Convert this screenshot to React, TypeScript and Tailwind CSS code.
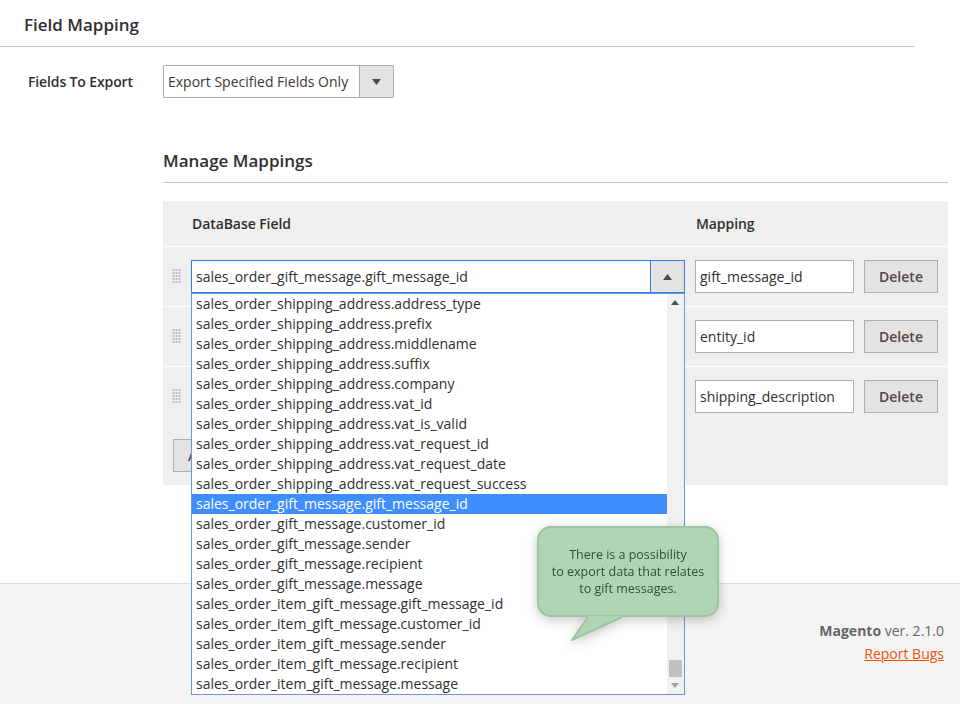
const options = [
  "sales_order_shipping_address.address_type",
  "sales_order_shipping_address.prefix",
  "sales_order_shipping_address.middlename",
  "sales_order_shipping_address.suffix",
  "sales_order_shipping_address.company",
  "sales_order_shipping_address.vat_id",
  "sales_order_shipping_address.vat_is_valid",
  "sales_order_shipping_address.vat_request_id",
  "sales_order_shipping_address.vat_request_date",
  "sales_order_shipping_address.vat_request_success",
  "sales_order_gift_message.gift_message_id",
  "sales_order_gift_message.customer_id",
  "sales_order_gift_message.sender",
  "sales_order_gift_message.recipient",
  "sales_order_gift_message.message",
  "sales_order_item_gift_message.gift_message_id",
  "sales_order_item_gift_message.customer_id",
  "sales_order_item_gift_message.sender",
  "sales_order_item_gift_message.recipient",
  "sales_order_item_gift_message.message",
];

function Grip() {
  return (
    <svg width="10" height="15" viewBox="0 0 10 15" className="shrink-0" fill="#bdbdbd">
      {[0, 3, 6, 9, 12].flatMap((y) =>
        [0, 3, 6].map((x) => <rect key={`${x}-${y}`} x={x + 0.5} y={y} width="2" height="2" />)
      )}
    </svg>
  );
}

function Row({ value, first, last }: { value: string; first?: boolean; last?: boolean }) {
  return (
    <div className={`flex h-[60px] items-start pt-[13px] pl-[8px] ${last ? "" : "border-b border-white"}`}>
      <div className="w-[20px] pt-[9px] pl-[1px] flex">
        <Grip />
      </div>
      <div className="w-[504px]">
        {first ? (
          <div className="flex h-[33px] w-[494px] border border-[#2f7fdb] bg-white">
            <div className="flex-1 pl-[4px] leading-[31px]">sales_order_gift_message.gift_message_id</div>
            <div className="flex w-[34px] items-center justify-center border-l border-[#2f7fdb] bg-[#e3e3e3]">
              <svg width="9" height="6" viewBox="0 0 9 6" fill="#514943"><path d="M4.5 0 9 6H0z" /></svg>
            </div>
          </div>
        ) : null}
      </div>
      <div className="h-[33px] w-[159px] border border-[#adadad] bg-white pl-[4px] leading-[31px]">{value}</div>
      <button className="ml-[10px] h-[33px] w-[74px] border border-[#adadad] bg-[#e3e3e3] font-semibold text-[#514943]">
        Delete
      </button>
    </div>
  );
}

export default function App() {
  return (
    <div
      className="relative flex h-[704px] w-[960px] flex-col overflow-hidden bg-white text-[14px] text-[#303030]"
      style={{ fontFamily: '"Open Sans", sans-serif' }}
    >
      <main className="h-[583px] shrink-0">
        <h2 className="h-[47px] w-[914px] border-b border-[#cac3b4] pl-[24px] text-[17px] leading-[49px] font-semibold">
          Field Mapping
        </h2>
        <div className="mt-[18px] flex items-center">
          <label className="w-[163px] pl-[28px] font-semibold tracking-[-0.13px]">Fields To Export</label>
          <div className="flex h-[33px] w-[231px] rounded-[1px] border border-[#adadad]">
            <div className="flex-1 pl-[4px] leading-[31px] text-[#41362f]">Export Specified Fields Only</div>
            <div className="flex w-[34px] items-center justify-center border-l border-[#adadad] bg-[#e3e3e3]">
              <svg width="9" height="6" viewBox="0 0 9 6" fill="#514943"><path d="M0 0h9L4.500 6z" /></svg>
            </div>
          </div>
        </div>
        <div className="ml-[163px] w-[785px]">
          <h3 className="mt-[50px] h-[35px] border-b border-[#cac3b4] text-[17px] leading-[26px] font-semibold">
            Manage Mappings
          </h3>
          <div className="mt-[18px] h-[284px] bg-[#efefef]">
            <div className="flex h-[46px] border-b border-white pl-[29px] leading-[45px] font-semibold tracking-[-0.08px]">
              <div className="w-[504px]">DataBase Field</div>
              <div>Mapping</div>
            </div>
            <Row value="gift_message_id" first />
            <Row value="entity_id" />
            <Row value="shipping_description" last />
            <button className="ml-[10px] mt-[12px] h-[33px] w-[70px] border border-[#adadad] bg-[#e3e3e3] text-left pl-[14px] font-semibold text-[#514943]">
              Add
            </button>
          </div>
        </div>
      </main>
      <footer className="flex-1 border-t border-[#dedede] bg-[#f4f4f4] pt-[35px] pr-[16px] text-right text-[#666]">
        <div className="leading-[24px]"><span className="font-bold">Magento</span> ver. 2.1.0</div>
        <a className="-mt-px block leading-[24px] text-[#eb5202] underline">Report Bugs</a>
      </footer>

      <div className="absolute left-[191px] top-[293px] flex h-[402px] w-[494px] border border-[#6f95d9] bg-white">
        <ul className="flex-1">
          {options.map((o, i) => (
            <li
              key={o}
              className={`h-[20px] pl-[4px] leading-[20px] ${i === 10 ? "bg-[#3e8eff] text-white" : ""}`}
            >
              {o}
            </li>
          ))}
        </ul>
        <div className="relative w-[17px] bg-[#f1f1f1]">
          <svg className="absolute left-[4px] top-[6px]" width="8" height="5" viewBox="0 0 8 5" fill="#505050"><path d="M4 0l4 5H0z" /></svg>
          <div className="absolute left-[2px] top-[366px] h-[17px] w-[13px] bg-[#c1c1c1]" />
          <svg className="absolute left-[4px] bottom-[6px]" width="8" height="5" viewBox="0 0 8 5" fill="#a3a3a3"><path d="M0 0h8L4 5z" /></svg>
        </div>
      </div>

      <div className="absolute left-[537px] top-[526px] h-[91px] w-[182px] drop-shadow-[0_3px_6px_rgba(0,0,0,0.22)]">
        <div className="flex h-full w-full items-center justify-center rounded-[14px] border-2 border-[#9fc5a0] bg-[#b1d4b2] text-center text-[12.5px] leading-[17px] text-[#2f4f35]">
          <p>
            There is a possibility
            <br />
            to export data that relates
            <br />
            to gift messages.
          </p>
        </div>
        <svg className="absolute left-[33px] top-[88px]" width="58" height="30" viewBox="0 0 58 30">
          <path d="M2 26 L18 2 H52 Z" fill="#b1d4b2" />
          <path d="M18 3 L2 26 L52 3" fill="none" stroke="#9fc5a0" strokeWidth="2" strokeLinejoin="round" />
        </svg>
      </div>
    </div>
  );
}
